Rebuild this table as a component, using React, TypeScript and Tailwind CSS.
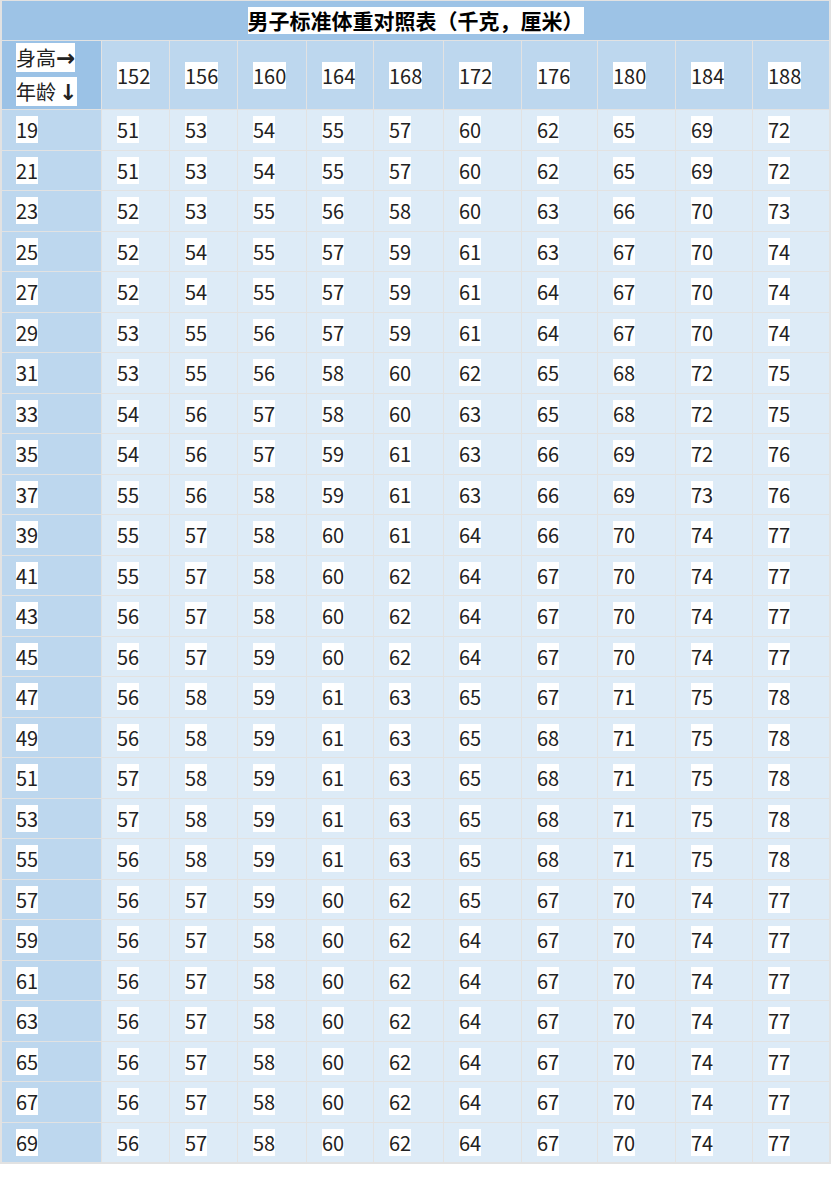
const heights = [152, 156, 160, 164, 168, 172, 176, 180, 184, 188];

const rows: [number, number[]][] = [
  [19, [51, 53, 54, 55, 57, 60, 62, 65, 69, 72]],
  [21, [51, 53, 54, 55, 57, 60, 62, 65, 69, 72]],
  [23, [52, 53, 55, 56, 58, 60, 63, 66, 70, 73]],
  [25, [52, 54, 55, 57, 59, 61, 63, 67, 70, 74]],
  [27, [52, 54, 55, 57, 59, 61, 64, 67, 70, 74]],
  [29, [53, 55, 56, 57, 59, 61, 64, 67, 70, 74]],
  [31, [53, 55, 56, 58, 60, 62, 65, 68, 72, 75]],
  [33, [54, 56, 57, 58, 60, 63, 65, 68, 72, 75]],
  [35, [54, 56, 57, 59, 61, 63, 66, 69, 72, 76]],
  [37, [55, 56, 58, 59, 61, 63, 66, 69, 73, 76]],
  [39, [55, 57, 58, 60, 61, 64, 66, 70, 74, 77]],
  [41, [55, 57, 58, 60, 62, 64, 67, 70, 74, 77]],
  [43, [56, 57, 58, 60, 62, 64, 67, 70, 74, 77]],
  [45, [56, 57, 59, 60, 62, 64, 67, 70, 74, 77]],
  [47, [56, 58, 59, 61, 63, 65, 67, 71, 75, 78]],
  [49, [56, 58, 59, 61, 63, 65, 68, 71, 75, 78]],
  [51, [57, 58, 59, 61, 63, 65, 68, 71, 75, 78]],
  [53, [57, 58, 59, 61, 63, 65, 68, 71, 75, 78]],
  [55, [56, 58, 59, 61, 63, 65, 68, 71, 75, 78]],
  [57, [56, 57, 59, 60, 62, 65, 67, 70, 74, 77]],
  [59, [56, 57, 58, 60, 62, 64, 67, 70, 74, 77]],
  [61, [56, 57, 58, 60, 62, 64, 67, 70, 74, 77]],
  [63, [56, 57, 58, 60, 62, 64, 67, 70, 74, 77]],
  [65, [56, 57, 58, 60, 62, 64, 67, 70, 74, 77]],
  [67, [56, 57, 58, 60, 62, 64, 67, 70, 74, 77]],
  [69, [56, 57, 58, 60, 62, 64, 67, 70, 74, 77]],
];

// 白底文字，和原表格里的高亮一样
function Hl({ children }: { children: React.ReactNode }) {
  return <span className="bg-white leading-[27px]">{children}</span>;
}

const arrowFont = { fontFamily: '"DejaVu Sans", sans-serif' };

export default function App() {
  return (
    <div
      className="w-[831px] bg-white text-[#222]"
      style={{ fontFamily: '"Noto Sans CJK SC", "Noto Sans", sans-serif' }}
    >
      <div className="bg-[#e2e2e2] pt-px pl-[2px] pr-[2px] pb-[2px]">
        <div className="grid grid-cols-[99px_67px_67px_68px_66px_69px_77px_75px_77px_76px_76px] grid-rows-[39px_68px_repeat(26,39.5px)] gap-px">
          {/* 标题 */}
          <div className="col-span-11 flex items-center justify-center bg-[#9dc3e6] text-[21px] font-bold text-black">
            <span className="bg-white leading-[27px]">男子标准体重对照表（千克，厘米）</span>
          </div>

          {/* 表头 */}
          <div className="flex flex-col justify-center gap-[4px] bg-[#9bc2e6] pl-[14px] text-[20px]">
            <div>
              <Hl>
                身高<span className="text-[23px] font-bold" style={arrowFont}>→</span>
              </Hl>
            </div>
            <div>
              <Hl>
                年龄<span className="pl-[3px] text-[22px] font-bold" style={arrowFont}>↓</span>
              </Hl>
            </div>
          </div>
          {heights.map((h) => (
            <div key={h} className="flex items-center bg-[#bdd7ee] pl-[15px] text-[20px]">
              <Hl>{h}</Hl>
            </div>
          ))}

          {/* 数据 */}
          {rows.map(([age, vals]) => (
            <div key={age} className="contents">
              <div className="flex items-center bg-[#bdd7ee] pl-[14px] text-[20px]">
                <Hl>{age}</Hl>
              </div>
              {vals.map((v, i) => (
                <div key={i} className="flex items-center bg-[#ddebf7] pl-[15px] text-[20px]">
                  <Hl>{v}</Hl>
                </div>
              ))}
            </div>
          ))}
        </div>
      </div>
    </div>
  );
}
